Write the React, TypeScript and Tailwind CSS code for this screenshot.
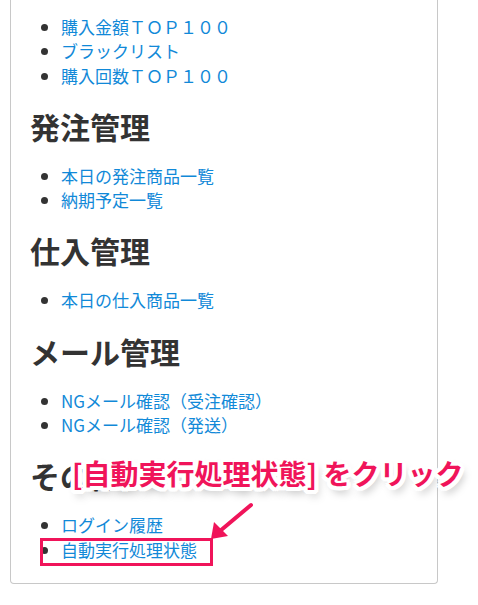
const sections: { title?: string; items: string[] }[] = [
  { items: ["購入金額ＴＯＰ１００", "ブラックリスト", "購入回数ＴＯＰ１００"] },
  { title: "発注管理", items: ["本日の発注商品一覧", "納期予定一覧"] },
  { title: "仕入管理", items: ["本日の仕入商品一覧"] },
  { title: "メール管理", items: ["NGメール確認（受注確認）", "NGメール確認（発送）"] },
  { title: "その他", items: ["ログイン履歴", "自動実行処理状態"] },
];

export default function App() {
  return (
    <div className="relative h-[605px] w-[478px] overflow-hidden bg-white pl-[10px] font-['Noto_Sans_CJK_JP',sans-serif] text-[#333]">
      <div className="w-[428px] rounded-b-[4px] border border-t-0 border-[#c8c8c8] pl-[19px] pt-[15px] pb-[21px]">
        {sections.map((s, i) => (
          <div key={i}>
            {s.title && (
              <h2 className="mt-[22px] mb-[21px] text-[30px] font-bold leading-[33px]">
                {s.title}
              </h2>
            )}
            <ul className="list-disc pl-[31px] text-[17px] leading-[24.3px]">
              {s.items.map((it) => (
                <li key={it} className="relative">
                  <a href="#" className="text-[#1189d8]">
                    {it}
                  </a>
                  {it === "自動実行処理状態" && (
                    <span className="pointer-events-none absolute top-0 left-[-21px] h-[28px] w-[173px] border-[3px] border-[#f0145a]" />
                  )}
                </li>
              ))}
            </ul>
          </div>
        ))}
      </div>

      {/* annotation */}
      <div className="absolute top-[455px] left-[72px] text-[28px] font-bold leading-[36px] whitespace-nowrap text-[#f0145a] [text-shadow:4px_0_0_#fff,-4px_0_0_#fff,0_4px_0_#fff,0_-4px_0_#fff,3px_3px_0_#fff,-3px_-3px_0_#fff,3px_-3px_0_#fff,-3px_3px_0_#fff,4px_2px_0_#fff,-4px_2px_0_#fff,2px_4px_0_#fff,-2px_4px_0_#fff,3px_6px_9px_rgba(0,0,0,0.35)]">
        [自動実行処理状態] をクリック
      </div>
      <svg className="absolute top-0 left-0" width="478" height="605" viewBox="0 0 478 605">
        <line x1="251" y1="505" x2="220" y2="531" stroke="#f0145a" strokeWidth="4" strokeLinecap="round" />
        <polygon points="211,539 214,522 228,536" fill="#f0145a" />
      </svg>
    </div>
  );
}
